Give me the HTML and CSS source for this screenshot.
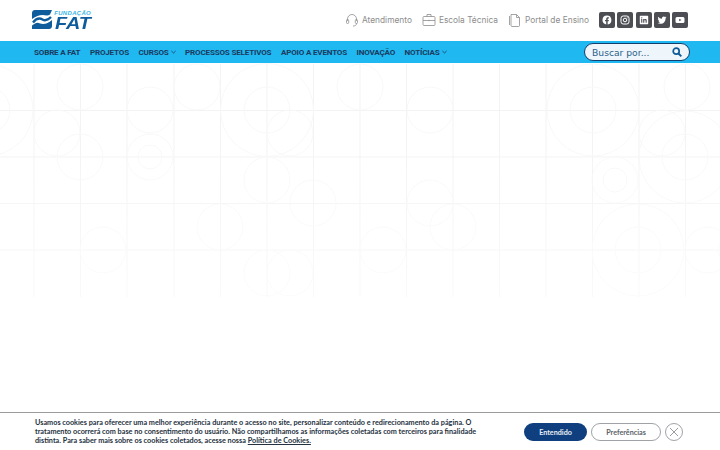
FILE: index.html
```html
<!DOCTYPE html>
<html lang="pt-BR">
<head>
<meta charset="utf-8">
<title>Fundação FAT</title>
<link rel="stylesheet" href="styles.css">
</head>
<body>
<header class="top">
  <a class="logo" href="#">
    <svg class="logo-mark" viewBox="0 0 20 19" width="20" height="19">
      <path fill="#0f5c9c" d="M3 0H20L18 4.500C15.500 6.500 13 5 10.500 5C7 5 4 6.500 0 9V3C0 1.300 1.300 0 3 0Z"/>
      <path fill="#0f5c9c" d="M0 15.500L3 13.500C6 11.500 8 14 11 14C14 14 17 12.500 20 10V16C20 17.700 18.700 19 17 19H0Z"/>
      <path fill="none" stroke="#0f5c9c" stroke-width="2.400" d="M1 12.500C5 7.500 8 8 10.500 9.500C13 11 15.500 10.500 19 7"/>
    </svg>
    <span class="logo-text"><span class="logo-small">FUNDAÇÃO</span><span class="logo-big">FAT</span></span>
  </a>
  <nav class="quick">
    <a class="quick-link" href="#">
      <svg viewBox="0 0 14 14" width="14" height="14" class="quick-icon"><path d="M2.500 8V6a4.500 4.500 0 0 1 9 0v2"/><rect x="1.500" y="6.500" width="2.200" height="4" rx="1"/><rect x="10.300" y="6.500" width="2.200" height="4" rx="1"/><path d="M11.500 10.500c0 1.800-1.500 2.500-3.500 2.500"/></svg>
      <span>Atendimento</span>
    </a>
    <a class="quick-link" href="#">
      <svg viewBox="0 0 14 14" width="14" height="14" class="quick-icon"><rect x="1" y="3.500" width="12" height="9" rx="1"/><path d="M5 3.500V1.500h4v2M1 7.500h12M7 6.800v1.400"/></svg>
      <span>Escola Técnica</span>
    </a>
    <a class="quick-link" href="#">
      <svg viewBox="0 0 14 14" width="14" height="14" class="quick-icon"><path d="M3 1.500h5.500l3 3v8a1 1 0 0 1-1 1H4a1 1 0 0 1-1-1Z"/><path d="M8.500 1.500v3h3M1.500 3v9"/></svg>
      <span>Portal de Ensino</span>
    </a>
    <div class="social">
      <a class="social-btn" href="#" aria-label="Facebook"><svg viewBox="0 0 10 10" width="10" height="10"><path fill="#fff" fill-rule="evenodd" d="M5 .5a4.500 4.500 0 0 0-.8 8.930V6.300H3V5h1.200V4c0-1.150.7-1.800 1.750-1.800.5 0 .95.080.95.080v1.100h-.55c-.55 0-.7.340-.7.680V5h1.200l-.2 1.300h-1v3.130A4.500 4.500 0 0 0 5 .5Z"/></svg></a>
      <a class="social-btn" href="#" aria-label="Instagram"><svg viewBox="0 0 10 10" width="10" height="10"><rect x="1" y="1" width="8" height="8" rx="2.200" fill="none" stroke="#fff"/><circle cx="5" cy="5" r="1.800" fill="none" stroke="#fff"/><circle cx="7.200" cy="2.800" r=".5" fill="#fff"/></svg></a>
      <a class="social-btn" href="#" aria-label="LinkedIn"><svg viewBox="0 0 10 10" width="10" height="10"><path fill="#fff" fill-rule="evenodd" d="M1.500.8h7a.7.7 0 0 1 .7.7v7a.7.7 0 0 1-.7.7h-7a.7.7 0 0 1-.7-.7v-7a.7.7 0 0 1 .7-.7ZM2.200 4v3.800h1.100V4Zm.55-1.800a.6.6 0 1 0 0 1.300.6.6 0 0 0 0-1.300ZM4.200 4v3.800h1.100V5.900c0-1.100 1.300-1.100 1.300 0v1.900h1.100V5.400c0-1.800-1.800-1.800-2.400-.9V4Z"/></svg></a>
      <a class="social-btn" href="#" aria-label="Twitter"><svg viewBox="0 0 10 10" width="10" height="10"><path fill="#fff" d="M9.500 2.300c-.35.150-.7.250-1.050.300.380-.230.670-.590.800-1-.350.210-.740.360-1.160.450A1.850 1.850 0 0 0 4.950 3.700 5.200 5.200 0 0 1 1.150 1.800a1.850 1.850 0 0 0 .57 2.470c-.300 0-.580-.090-.830-.230 0 .9.630 1.660 1.480 1.830-.270.070-.550.080-.830.030.230.740.920 1.280 1.730 1.300A3.700 3.700 0 0 1 .5 8c.82.530 1.790.830 2.830.830 3.400 0 5.320-2.870 5.200-5.440.37-.27.700-.6.970-1.090Z"/></svg></a>
      <a class="social-btn" href="#" aria-label="YouTube"><svg viewBox="0 0 10 10" width="10" height="10"><path fill="#fff" fill-rule="evenodd" d="M2 2h6a1.500 1.500 0 0 1 1.500 1.500v3A1.500 1.500 0 0 1 8 8H2A1.500 1.500 0 0 1 .5 6.500v-3A1.500 1.500 0 0 1 2 2Zm2.200 1.700v2.600L6.500 5Z"/></svg></a>
    </div>
  </nav>
</header>

<div class="bar">
  <nav class="menu">
    <a href="#">SOBRE A FAT</a>
    <a href="#">PROJETOS</a>
    <a href="#" class="has-sub">CURSOS<svg viewBox="0 0 6 4" width="5" height="4"><path d="M.5.800 3 3.200 5.500.800" fill="none" stroke="#1d3a5f"/></svg></a>
    <a href="#">PROCESSOS SELETIVOS</a>
    <a href="#">APOIO A EVENTOS</a>
    <a href="#">INOVAÇÃO</a>
    <a href="#" class="has-sub">NOTÍCIAS<svg viewBox="0 0 6 4" width="5" height="4"><path d="M.5.800 3 3.200 5.500.800" fill="none" stroke="#1d3a5f"/></svg></a>
  </nav>
  <form class="search">
    <span class="search-text">Buscar por...</span>
    <svg viewBox="0 0 10 10" width="10" height="10"><circle cx="4.200" cy="4.200" r="3" fill="none" stroke="#0e5a96" stroke-width="1.700"/><path d="M6.500 6.500 9.300 9.300" stroke="#0e5a96" stroke-width="1.900"/></svg>
  </form>
</div>

<main class="hero">
  <svg class="pattern" viewBox="0 -1 720 234" width="720" height="234">
    <g class="grid-lines">
      <path d="M0 46.500H720M0 93H720M0 139.500H720M0 186H720"/>
      <path d="M34 0V233M80.500 0V233M127 0V233M174 0V233M220.500 0V233M267 0V233M313.500 0V233M360 0V233M406.500 0V233M453 0V233M499.500 0V233M546 0V233M592.500 0V233M639 0V233M685.500 0V233"/>
    </g>
    <g class="circles">
      <circle cx="-13" cy="46" r="46"/><circle cx="-13" cy="46" r="23"/>
      <circle cx="57" cy="69" r="23"/><circle cx="80" cy="23" r="23"/><circle cx="80" cy="93" r="23"/>
      <circle cx="150" cy="46" r="23"/>
      <circle cx="197" cy="23" r="23"/>
      <circle cx="267" cy="46" r="46.500"/><circle cx="267" cy="46" r="23"/><circle cx="290" cy="69" r="23"/>
      <circle cx="150" cy="93" r="23"/><circle cx="150" cy="93" r="12"/>
      <circle cx="360" cy="23" r="23"/>
      <circle cx="267" cy="116" r="23"/><circle cx="313" cy="139" r="23"/>
      <circle cx="220" cy="163" r="23"/>
      <circle cx="290" cy="209" r="23"/><circle cx="267" cy="209" r="23"/>
      <circle cx="103" cy="186" r="23"/>
      <circle cx="687" cy="23" r="23"/><circle cx="662" cy="69" r="23"/><circle cx="685" cy="93" r="23"/>
      <circle cx="685" cy="93" r="46"/>
      <circle cx="593" cy="46" r="23"/><circle cx="593" cy="46" r="46"/>
      <circle cx="615" cy="116" r="23"/><circle cx="615" cy="116" r="12"/>
      <circle cx="638" cy="186" r="23"/><circle cx="638" cy="186" r="46"/>
      <circle cx="708" cy="186" r="23"/><circle cx="730" cy="186" r="12"/>
      <circle cx="430" cy="46" r="23"/><circle cx="430" cy="139" r="23"/>
      <circle cx="453" cy="163" r="23"/><circle cx="383" cy="186" r="23"/>
    </g>
  </svg>
</main>

<aside class="cookie">
  <p class="cookie-text">Usamos cookies para oferecer uma melhor experiência durante o acesso no site, personalizar conteúdo e redirecionamento da página. O tratamento ocorrerá com base no consentimento do usuário. Não compartilhamos as informações coletadas com terceiros para finalidade distinta. Para saber mais sobre os cookies coletados, acesse nossa <a href="#">Política de Cookies.</a></p>
  <div class="cookie-actions">
    <button class="btn btn-primary" type="button">Entendido</button>
    <button class="btn btn-outline" type="button">Preferências</button>
    <button class="btn-close" type="button" aria-label="Fechar"><svg viewBox="0 0 10 10" width="10" height="10"><path d="M1 1 9 9M9 1 1 9" stroke="#7d8288" fill="none" stroke-width=".8"/></svg></button>
  </div>
</aside>
</body>
</html>
```

FILE: styles.css
```css
* { box-sizing: border-box; }
html, body { margin: 0; padding: 0; }
body {
  width: 720px;
  height: 450px;
  overflow: hidden;
  background: #fff;
  font-family: "Inter", "Liberation Sans", sans-serif;
}
a { color: inherit; text-decoration: none; }

.top {
  height: 41px;
  padding: 0 32px 2px 32px;
  display: flex;
  align-items: center;
  justify-content: space-between;
}
.logo { display: flex; align-items: center; gap: 0; }
.logo-mark { display: block; }
.logo-text { display: flex; flex-direction: column; align-items: flex-end; width: 39px; }
.logo-small {
  font: italic 700 6px/7px "Liberation Sans", sans-serif;
  color: #3bb4e6;
  letter-spacing: .3px;
  white-space: nowrap;
}
.logo-big {
  font: italic 700 16.500px/12px "Liberation Sans", sans-serif;
  color: #0f5c9c;
  transform: scaleX(1.2);
  transform-origin: right center;
}

.quick { display: flex; align-items: center; }
.quick-link {
  display: flex;
  align-items: center;
  gap: 3px;
  margin-right: 10px;
  font-size: 8.350px;
  color: #8d8d8d;
}
.quick-icon { fill: none; stroke: #8d8d8d; stroke-width: .8; display: block; }
.social { display: flex; gap: 2.250px; }
.social-btn {
  width: 16px;
  height: 16px;
  border-radius: 2px;
  background: #4c4e54;
  display: flex;
  align-items: center;
  justify-content: center;
}

.bar {
  height: 22px;
  background: #1fb8f1;
  padding: 0 30px 0 34px;
  display: flex;
  align-items: center;
  justify-content: space-between;
}
.menu { display: flex; align-items: center; gap: 9.500px; }
.menu a {
  display: flex;
  align-items: center;
  gap: 2px;
  font-family: "Roboto", sans-serif;
  font-size: 8.100px;
  font-weight: 700;
  letter-spacing: -.2px;
  color: #1d3a5f;
  white-space: nowrap;
}
.search {
  width: 106px;
  height: 18px;
  border: 1.500px solid #123f6d;
  border-radius: 9px;
  background: #eef6fb;
  padding: 0 7px;
  display: flex;
  align-items: center;
  justify-content: space-between;
}
.search-text {
  font: 9.200px "DejaVu Sans", sans-serif;
  color: #2c5f8a;
}

.hero { height: 234px; }
.pattern {
  display: block;
  -webkit-mask-image: linear-gradient(to bottom, #000 30%, rgba(0,0,0,.5) 100%);
  mask-image: linear-gradient(to bottom, #000 30%, rgba(0,0,0,.5) 100%);
}
.grid-lines path { fill: none; stroke: #f3f3f3; stroke-width: 1; }
.circles circle { fill: none; stroke: #f8f8f8; stroke-width: 1; }

.cookie {
  position: fixed;
  left: 0;
  right: 0;
  bottom: 0;
  height: 38px;
  background: #fff;
  border-top: 1px solid #9b9b9b;
  padding: 5px 37px 0 35px;
  display: flex;
  align-items: flex-start;
  justify-content: space-between;
}
.cookie-text {
  margin: 0;
  width: 450px;
  font: 700 7.280px/9px "Lato", sans-serif;
  color: #25313e;
}
.cookie-text a { text-decoration: underline; }
.cookie-actions { display: flex; align-items: center; gap: 4px; margin-top: 5px; }
.btn {
  height: 18px;
  border-radius: 9px;
  font: 700 7.200px "Lato", sans-serif;
  padding: 0;
}
.btn-primary { width: 63px; background: #0f3f7e; border: 0; color: #e8eef6; }
.btn-outline { width: 70px; background: #fff; border: 1px solid #9fa3a8; color: #5c6268; }
.btn-close {
  width: 18px;
  height: 18px;
  padding: 0;
  border-radius: 50%;
  border: 1px solid #9fa3a8;
  background: #fff;
  display: flex;
  align-items: center;
  justify-content: center;
}
```
